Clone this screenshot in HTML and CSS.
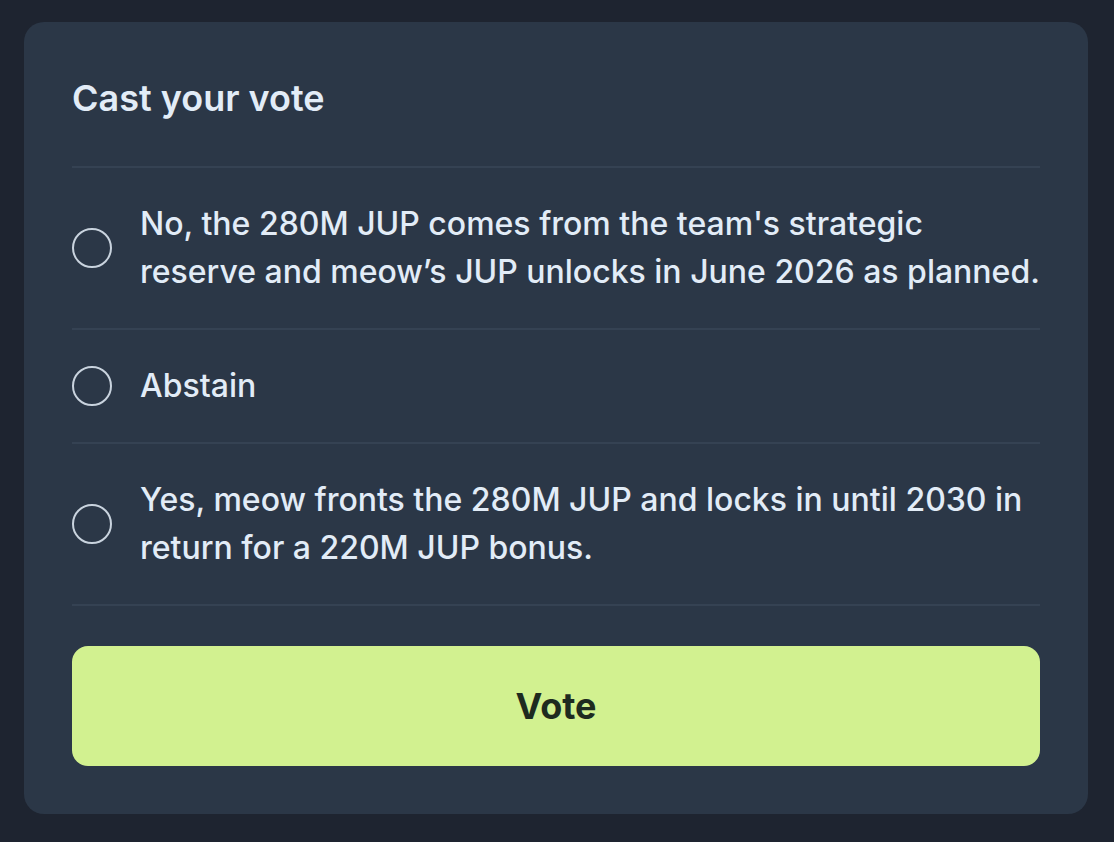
FILE: index.html
```html
<!DOCTYPE html>
<html lang="en">
<head>
<meta charset="utf-8">
<title>Cast your vote</title>
<link rel="stylesheet" href="styles.css">
</head>
<body>
<div class="page">
  <section class="card">
    <h2 class="title">Cast your vote</h2>
    <ul class="options">
      <li class="option">
        <span class="radio"></span>
        <span class="label">No, the 280M JUP comes from the team's strategic reserve and meow’s JUP unlocks in June 2026 as planned.</span>
      </li>
      <li class="option">
        <span class="radio"></span>
        <span class="label">Abstain</span>
      </li>
      <li class="option">
        <span class="radio"></span>
        <span class="label">Yes, meow fronts the 280M JUP and locks in until 2030 in return for a 220M JUP bonus.</span>
      </li>
    </ul>
    <button class="vote" type="button">Vote</button>
  </section>
</div>
</body>
</html>
```

FILE: styles.css
```css
html, body {
  margin: 0;
  padding: 0;
  background: #1e2430;
}

body {
  font-family: Inter, "Noto Sans", "Liberation Sans", sans-serif;
  color: #e2ecf7;
}

.page {
  padding: 22px 26px 29px 24px;
}

.card {
  background: #2b3747;
  border-radius: 20px;
  padding: 48px;
}

.title {
  margin: 0;
  font-size: 36px;
  line-height: 56px;
  font-weight: 600;
  color: #e2ecf7;
}

.options {
  list-style: none;
  margin: 40px 0 0;
  padding: 0;
  border-top: 2px solid #354253;
}

.option {
  display: flex;
  align-items: center;
  gap: 28px;
  padding: 32px 0;
  border-bottom: 2px solid #354253;
}

.radio {
  flex: 0 0 auto;
  box-sizing: border-box;
  width: 40px;
  height: 40px;
  border: 2px solid #c9d3de;
  border-radius: 50%;
}

.label {
  font-size: 32px;
  line-height: 48px;
  font-weight: 500;
}

.vote {
  display: block;
  width: 100%;
  height: 120px;
  margin-top: 40px;
  border: none;
  border-radius: 16px;
  background: #d2f190;
  color: #1e2b1f;
  font-family: Inter, "Noto Sans", "Liberation Sans", sans-serif;
  font-size: 36px;
  font-weight: 700;
  cursor: pointer;
}
```
